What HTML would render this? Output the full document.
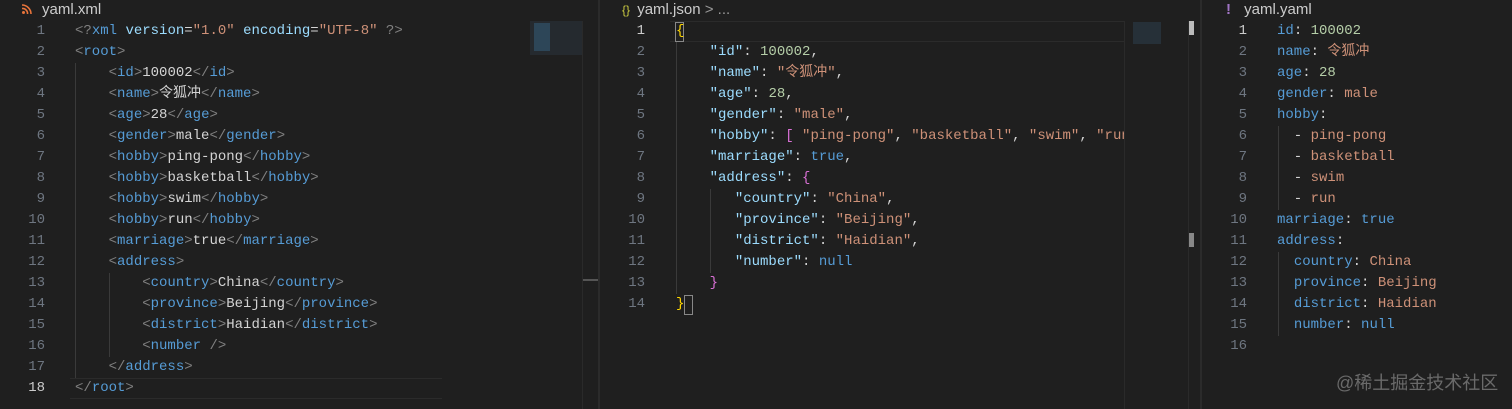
<!DOCTYPE html>
<html><head><meta charset="utf-8"><style>
*{margin:0;padding:0;box-sizing:border-box}
body{width:1512px;height:409px;background:#1f1f1f;overflow:hidden;position:relative;font-family:"Liberation Mono","Noto Sans CJK SC",monospace;font-size:14px;color:#d4d4d4}
.pane{position:absolute;top:0;height:409px;background:#1f1f1f}
.tab{position:absolute;top:0;height:20px;font-family:"Liberation Sans",sans-serif;font-size:15px;color:#cccccc;line-height:20px;white-space:nowrap}
.ln{position:absolute;top:21px;text-align:right;color:#6e7681;line-height:21px}
.ln div.c{color:#cccccc}
.code{position:absolute;top:21px;line-height:21px;white-space:pre}
.g{position:absolute;width:1px;background:#3a3a3a}
.t{color:#569cd6}.p{color:#808080}.a{color:#9cdcfe}.s{color:#ce9178}.n{color:#b5cea8}.y{color:#ffd700}.m{color:#da70d6}
.cur{position:absolute;height:21px;border-top:1px solid #2b2b2b;border-bottom:1px solid #2b2b2b}
</style></head><body>
<!-- pane 1 -->
<div class="pane" style="left:0;width:598px">
<div class="tab" style="left:22px"><svg width="10" height="10" viewBox="0 0 10 10" style="vertical-align:0"><circle cx="1.5" cy="8.5" r="1.5" fill="#e8743b"/><path d="M0 4.5a5 5 0 0 1 5.5 5.5M0 1a9 9 0 0 1 9 9" stroke="#e8743b" stroke-width="1.6" fill="none"/></svg><span style="margin-left:10px">yaml.xml</span></div>
<div class="cur" style="left:70px;top:378px;width:372px"></div>
<div class="ln" style="left:20px;width:25px"><div>1</div><div>2</div><div>3</div><div>4</div><div>5</div><div>6</div><div>7</div><div>8</div><div>9</div><div>10</div><div>11</div><div>12</div><div>13</div><div>14</div><div>15</div><div>16</div><div>17</div><div class="c">18</div></div>
<div class="g" style="left:75px;top:63px;height:315px"></div>
<div class="g" style="left:109px;top:273px;height:84px"></div>
<div class="code" style="left:75px"><span class="p">&lt;?</span><span class="t">xml</span> <span class="a">version</span>=<span class="s">"1.0"</span> <span class="a">encoding</span>=<span class="s">"UTF-8"</span> <span class="p">?&gt;</span>
<span class="p">&lt;</span><span class="t">root</span><span class="p">&gt;</span>
    <span class="p">&lt;</span><span class="t">id</span><span class="p">&gt;</span>100002<span class="p">&lt;/</span><span class="t">id</span><span class="p">&gt;</span>
    <span class="p">&lt;</span><span class="t">name</span><span class="p">&gt;</span>令狐冲<span class="p">&lt;/</span><span class="t">name</span><span class="p">&gt;</span>
    <span class="p">&lt;</span><span class="t">age</span><span class="p">&gt;</span>28<span class="p">&lt;/</span><span class="t">age</span><span class="p">&gt;</span>
    <span class="p">&lt;</span><span class="t">gender</span><span class="p">&gt;</span>male<span class="p">&lt;/</span><span class="t">gender</span><span class="p">&gt;</span>
    <span class="p">&lt;</span><span class="t">hobby</span><span class="p">&gt;</span>ping-pong<span class="p">&lt;/</span><span class="t">hobby</span><span class="p">&gt;</span>
    <span class="p">&lt;</span><span class="t">hobby</span><span class="p">&gt;</span>basketball<span class="p">&lt;/</span><span class="t">hobby</span><span class="p">&gt;</span>
    <span class="p">&lt;</span><span class="t">hobby</span><span class="p">&gt;</span>swim<span class="p">&lt;/</span><span class="t">hobby</span><span class="p">&gt;</span>
    <span class="p">&lt;</span><span class="t">hobby</span><span class="p">&gt;</span>run<span class="p">&lt;/</span><span class="t">hobby</span><span class="p">&gt;</span>
    <span class="p">&lt;</span><span class="t">marriage</span><span class="p">&gt;</span>true<span class="p">&lt;/</span><span class="t">marriage</span><span class="p">&gt;</span>
    <span class="p">&lt;</span><span class="t">address</span><span class="p">&gt;</span>
        <span class="p">&lt;</span><span class="t">country</span><span class="p">&gt;</span>China<span class="p">&lt;/</span><span class="t">country</span><span class="p">&gt;</span>
        <span class="p">&lt;</span><span class="t">province</span><span class="p">&gt;</span>Beijing<span class="p">&lt;/</span><span class="t">province</span><span class="p">&gt;</span>
        <span class="p">&lt;</span><span class="t">district</span><span class="p">&gt;</span>Haidian<span class="p">&lt;/</span><span class="t">district</span><span class="p">&gt;</span>
        <span class="p">&lt;</span><span class="t">number</span> <span class="p">/&gt;</span>
    <span class="p">&lt;/</span><span class="t">address</span><span class="p">&gt;</span>
<span class="p">&lt;/</span><span class="t">root</span><span class="p">&gt;</span></div>
<div style="position:absolute;left:530px;top:21px;width:52px;height:34px;background:#252a2f"></div>
<div style="position:absolute;left:534px;top:23px;width:16px;height:28px;background:#2f4d63;opacity:.8"></div>
<div style="position:absolute;left:582px;top:21px;width:1px;height:388px;background:#2a2a2a"></div>
<div style="position:absolute;left:583px;top:279px;width:15px;height:2px;background:#555"></div>
</div>
<div style="position:absolute;left:598px;top:0;width:2px;height:409px;background:#2b2b2b"></div>
<!-- pane 2 -->
<div class="pane" style="left:600px;width:600px">
<div class="tab" style="left:22px"><span style="color:#cbcb41;font-size:12px">{}</span> <span style="margin-left:3px">yaml.json</span> <span style="color:#999">&gt; ...</span></div>
<div class="cur" style="left:70px;top:21px;width:454px"></div>
<div class="ln" style="left:20px;width:25px"><div class="c">1</div><div>2</div><div>3</div><div>4</div><div>5</div><div>6</div><div>7</div><div>8</div><div>9</div><div>10</div><div>11</div><div>12</div><div>13</div><div>14</div></div>
<div class="g" style="left:76px;top:42px;height:252px"></div>
<div class="g" style="left:110px;top:189px;height:84px"></div>
<div style="position:absolute;left:75px;top:22px;width:9px;height:20px;border:1px solid #888"></div>
<div style="position:absolute;left:84px;top:295px;width:9px;height:20px;border:1px solid #888"></div>
<div class="code" style="left:76px;width:448px;overflow:hidden"><span class="y">{</span>
    <span class="a">"id"</span>: <span class="n">100002</span>,
    <span class="a">"name"</span>: <span class="s">"令狐冲"</span>,
    <span class="a">"age"</span>: <span class="n">28</span>,
    <span class="a">"gender"</span>: <span class="s">"male"</span>,
    <span class="a">"hobby"</span>: <span class="m">[</span> <span class="s">"ping-pong"</span>, <span class="s">"basketball"</span>, <span class="s">"swim"</span>, <span class="s">"run"</span> <span class="m">]</span>,
    <span class="a">"marriage"</span>: <span class="t">true</span>,
    <span class="a">"address"</span>: <span class="m">{</span>
       <span class="a">"country"</span>: <span class="s">"China"</span>,
       <span class="a">"province"</span>: <span class="s">"Beijing"</span>,
       <span class="a">"district"</span>: <span class="s">"Haidian"</span>,
       <span class="a">"number"</span>: <span class="t">null</span>
    <span class="m">}</span>
<span class="y">}</span></div>
<div style="position:absolute;left:533px;top:22px;width:28px;height:22px;background:#263038"></div>
<div style="position:absolute;left:524px;top:21px;width:1px;height:388px;background:#2a2a2a"></div>
<div style="position:absolute;left:588px;top:21px;width:1px;height:388px;background:#2a2a2a"></div>
<div style="position:absolute;left:589px;top:21px;width:5px;height:14px;background:#bbb"></div>
<div style="position:absolute;left:589px;top:233px;width:5px;height:14px;background:#888"></div>
</div>
<div style="position:absolute;left:1200px;top:0;width:2px;height:409px;background:#2b2b2b"></div>
<!-- pane 3 -->
<div class="pane" style="left:1202px;width:310px">
<div class="tab" style="left:24px"><span style="color:#a074c4;font-weight:bold">!</span> <span style="margin-left:9px">yaml.yaml</span></div>
<div class="ln" style="left:18px;width:27px"><div class="c">1</div><div>2</div><div>3</div><div>4</div><div>5</div><div>6</div><div>7</div><div>8</div><div>9</div><div>10</div><div>11</div><div>12</div><div>13</div><div>14</div><div>15</div><div>16</div></div>
<div class="g" style="left:76px;top:126px;height:84px"></div>
<div class="g" style="left:76px;top:252px;height:84px"></div>
<div class="code" style="left:75px"><span class="t">id</span>: <span class="n">100002</span>
<span class="t">name</span>: <span class="s">令狐冲</span>
<span class="t">age</span>: <span class="n">28</span>
<span class="t">gender</span>: <span class="s">male</span>
<span class="t">hobby</span>:
  - <span class="s">ping-pong</span>
  - <span class="s">basketball</span>
  - <span class="s">swim</span>
  - <span class="s">run</span>
<span class="t">marriage</span>: <span class="t">true</span>
<span class="t">address</span>:
  <span class="t">country</span>: <span class="s">China</span>
  <span class="t">province</span>: <span class="s">Beijing</span>
  <span class="t">district</span>: <span class="s">Haidian</span>
  <span class="t">number</span>: <span class="t">null</span>
</div>
<div style="position:absolute;left:134px;top:369px;font-family:'Liberation Sans','Noto Sans CJK SC',sans-serif;font-size:18px;color:#6a6a6a">@稀土掘金技术社区</div>
</div>
</body></html>
